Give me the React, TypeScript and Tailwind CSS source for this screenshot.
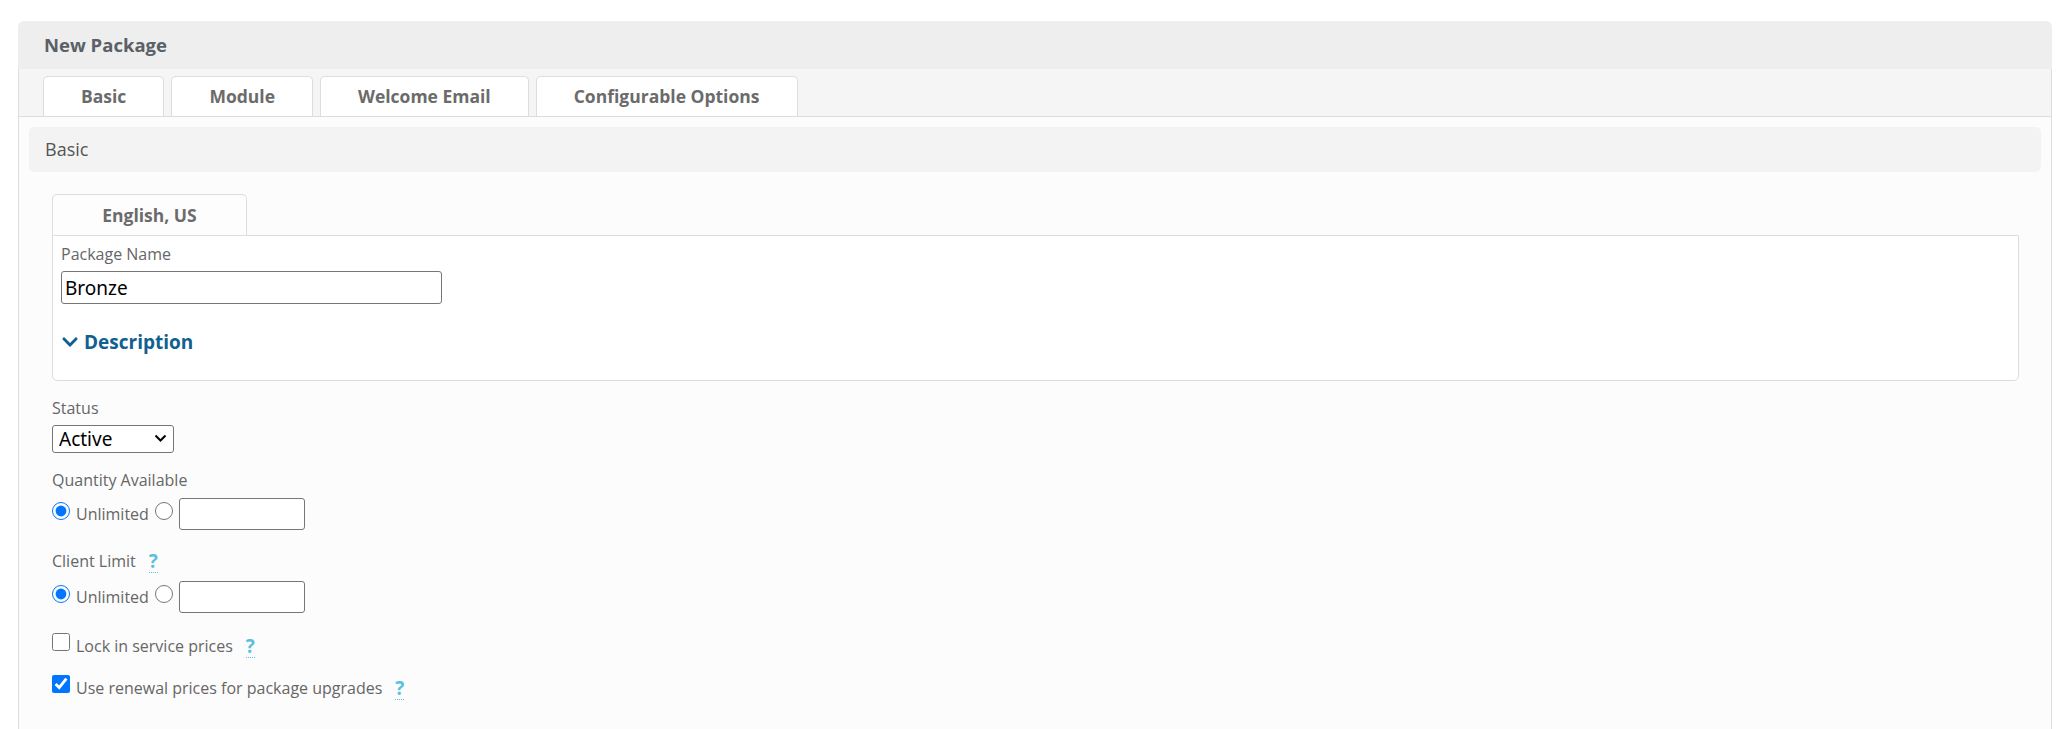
import { FaChevronDown } from 'react-icons/fa';

function Help() {
  return (
    <span className="ml-[13px] inline-block border-b border-dotted border-[#5bc0de] text-[19px] font-bold leading-[22px] text-[#5bc0de]">
      ?
    </span>
  );
}

function RadioRow({ name }: { name: string }) {
  return (
    <div className="flex h-[32px] items-center">
      <input type="radio" name={name} defaultChecked className="m-0 mb-[6px] h-[18px] w-[18px]" />
      <span className="ml-[6px] text-[16px] text-[#666]">Unlimited</span>
      <input type="radio" name={name} className="m-0 mb-[6px] ml-[6px] h-[18px] w-[18px]" />
      <input
        type="text"
        className="ml-[6px] h-full w-[126px] rounded-[3px] border border-[#767676] bg-white px-[3px] text-[19px] outline-none"
      />
    </div>
  );
}

const tabs = ['Basic', 'Module', 'Welcome Email', 'Configurable Options'];

export default function App() {
  return (
    <div className="min-h-screen bg-white pl-[18px] pr-[11px] pt-[21px] font-['Open_Sans',sans-serif]">
      <div className="overflow-hidden rounded-t-[6px]">
        <div className="flex h-[48px] items-center bg-[#eeeeee] pl-[26px] text-[18.5px] font-bold text-[#5b6066]">
          New Package
        </div>

        <div className="flex h-[48px] items-end gap-[7px] border-x border-b border-[#dddddd] bg-[#f5f5f5] pl-[24px]">
          {tabs.map((t) => (
            <div
              key={t}
              className="flex h-[40px] items-center rounded-t-[5px] border border-b-0 border-[#dddddd] bg-white px-[37px] text-[17.5px] font-bold text-[#6b6b6b]"
            >
              {t}
            </div>
          ))}
        </div>

        <div className="min-h-[620px] border-x border-[#dddddd] bg-[#fcfcfc] px-[10px] pt-[10px]">
          <div className="flex h-[45px] items-center rounded-[5px] bg-[#f3f3f3] pl-[16px] text-[18px] text-[#555]">
            Basic
          </div>

          <div className="pl-[23px] pr-[22px] pt-[22px]">
            <div className="flex h-[41px] w-[195px] items-center justify-center rounded-t-[5px] border border-b-0 border-[#dddddd] bg-[#fdfdfd] text-[17.5px] font-bold text-[#6b6b6b]">
              English, US
            </div>
            <div className="h-[146px] rounded-b-[5px] border border-[#dddddd] bg-white px-[8px]">
              <div className="pt-[6px] text-[16px] leading-[24px] text-[#666]">Package Name</div>
              <input
                type="text"
                defaultValue="Bronze"
                className="mt-[5px] h-[33px] w-[381px] rounded-[3px] border border-[#767676] px-[3px] font-['Noto_Sans',sans-serif] text-[19px] text-black outline-none"
              />
              <div className="mt-[25px] flex h-[26px] items-center gap-[5px] text-[19px] font-bold text-[#11608f]">
                <FaChevronDown size={18} />
                <span>Description</span>
              </div>
            </div>

            <div className="mt-[15px] text-[16px] leading-[24px] text-[#666]">Status</div>
            <div className="relative mt-[5px] w-[122px]">
              <select className="h-[28px] w-full appearance-none rounded-[3px] border border-[#767676] bg-white pl-[6px] font-['Noto_Sans',sans-serif] text-[19px] leading-none text-black outline-none">
                <option>Active</option>
                <option>Inactive</option>
                <option>Restricted</option>
              </select>
              <svg
                className="pointer-events-none absolute right-[7px] top-[9px]"
                width="13"
                height="9"
                viewBox="0 0 13 9"
                fill="none"
                stroke="#000"
                strokeWidth="2"
              >
                <path d="M1.5 1.5 6.5 6.5 11.5 1.5" />
              </svg>
            </div>

            <div className="mt-[15px] text-[16px] leading-[24px] text-[#666]">Quantity Available</div>
            <div className="mt-[6px]">
              <RadioRow name="qty" />
            </div>

            <div className="mt-[19px] flex items-end text-[16px] leading-[24px] text-[#666]">
              <span>Client Limit</span>
              <Help />
            </div>
            <div className="mt-[8px]">
              <RadioRow name="limit" />
            </div>

            <div className="mt-[21px] flex h-[24px] items-center text-[16px] text-[#666]">
              <input type="checkbox" className="m-0 mb-[9px] h-[18px] w-[18px]" />
              <span className="ml-[6px]">Lock in service prices</span>
              <Help />
            </div>

            <div className="mt-[18px] flex h-[24px] items-center text-[16px] text-[#666]">
              <input type="checkbox" defaultChecked className="m-0 mb-[8px] h-[18px] w-[18px]" />
              <span className="ml-[6px]">Use renewal prices for package upgrades</span>
              <Help />
            </div>
          </div>
        </div>
      </div>
    </div>
  );
}
